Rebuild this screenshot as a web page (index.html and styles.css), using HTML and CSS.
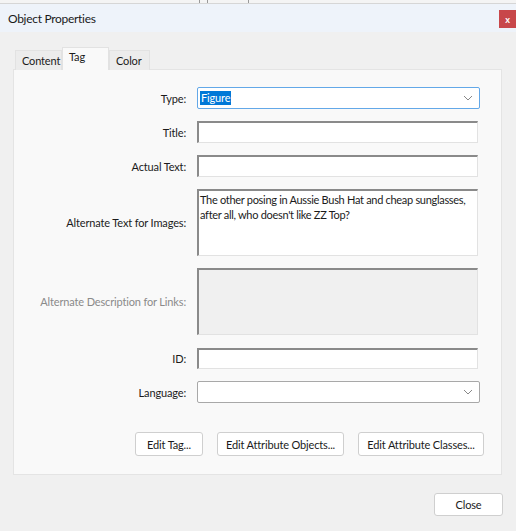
FILE: index.html
```html
<!DOCTYPE html>
<html>
<head>
<meta charset="utf-8">
<link rel="stylesheet" href="styles.css">
</head>
<body>
<div class="appstrip">
  <span class="seg seg1"></span><span class="seg seg2"></span><span class="seg seg3"></span><span class="seg seg4"></span>
</div>
<div class="titlebar">
  <span class="title">Object Properties</span>
  <span class="closex">x</span>
</div>
<div class="dialog">
  <div class="tabs">
    <span class="tab tab-content">Content</span>
    <span class="tab tab-tag active">Tag</span>
    <span class="tab tab-color">Color</span>
  </div>
  <div class="panel">
    <div class="form">
      <label class="lbl">Type:</label>
      <div class="select focus"><span class="sel">Figure</span><svg class="chev" width="10" height="6" viewBox="0 0 10 6"><path d="M1 1 L5 5 L9 1" fill="none" stroke="#888" stroke-width="1"/></svg></div>

      <label class="lbl">Title:</label>
      <div class="input"></div>

      <label class="lbl">Actual Text:</label>
      <div class="input"></div>

      <label class="lbl">Alternate Text for Images:</label>
      <div class="input area">The other posing in Aussie Bush Hat and cheap sunglasses, after all, who doesn't like ZZ Top?</div>

      <label class="lbl disabled">Alternate Description for Links:</label>
      <div class="input area off"></div>

      <label class="lbl r-id">ID:</label>
      <div class="input short r-id"></div>

      <label class="lbl">Language:</label>
      <div class="select"><span></span><svg class="chev" width="10" height="6" viewBox="0 0 10 6"><path d="M1 1 L5 5 L9 1" fill="none" stroke="#888" stroke-width="1"/></svg></div>
    </div>
    <div class="actions">
      <button class="btn b1">Edit Tag...</button>
      <button class="btn b2">Edit Attribute Objects...</button>
      <button class="btn b3">Edit Attribute Classes...</button>
    </div>
  </div>
  <div class="footer">
    <button class="btn close">Close</button>
  </div>
</div>
</body>
</html>
```

FILE: styles.css
```css
* { box-sizing: border-box; }
html, body { margin: 0; padding: 0; }
body {
  width: 516px;
  height: 531px;
  overflow: hidden;
  background: #f0f0f0;
  font-family: "Lato", "Open Sans", sans-serif;
  font-size: 11px;
  letter-spacing: -0.15px;
  color: #1b1b1b;
}
.appstrip {
  height: 4px;
  background: #f4f4f4;
  border-bottom: 1px solid #d6d6d6;
  display: flex;
  overflow: hidden;
}
.seg { height: 4px; border-right: 1px solid #999; }
.seg1 { width: 200px; }
.seg2 { width: 8px; }
.seg3 { width: 41px; }
.seg4 { flex: 1; border-right: none; }
.titlebar {
  height: 28px;
  background: #eef3fa;
  display: flex;
  align-items: center;
  justify-content: space-between;
  padding-left: 8px;
}
.title { font-size: 12px; letter-spacing: -0.3px; color: #1a1a1a; }
.closex {
  width: 17px;
  height: 18px;
  background: #c8474a;
  color: #fff;
  font-size: 9px;
  font-weight: bold;
  display: flex;
  align-items: center;
  justify-content: center;
  margin-top: 2px;
}
.dialog { padding: 16px 14px 0 13px; }
.tabs { display: flex; align-items: flex-end; height: 22px; margin-left: 2px; position: relative; z-index: 1; }
.tab {
  height: 20px;
  padding: 0 6px;
  background: #ececec;
  border: 1px solid #e2e2e2;
  border-bottom: none;
  display: flex;
  align-items: center;
}
.tab-content { width: 47px; }
.tab-tag { width: 47px; height: 23px; align-items: flex-start; padding-top: 2px; }
.tab-color { width: 41px; }
.tab.active { background: #f9f9f9; }
.panel {
  width: 489px;
  height: 406px;
  margin-top: -1px;
  background: #f9f9f9;
  border: 1px solid #e4e4e4;
  padding: 17px 0 0 0;
  display: flex;
  flex-direction: column;
}
.form {
  display: grid;
  grid-template-columns: 172px 283px;
  column-gap: 11px;
  row-gap: 12px;
  align-items: center;
}
.lbl { text-align: right; color: #1b1b1b; }
.lbl.disabled { color: #8a8a8a; }
.r-id { margin-top: 1px; }
.select {
  height: 22px;
  background: #fff;
  border: 1px solid #a8a8a8;
  border-radius: 2px;
  display: flex;
  align-items: center;
  justify-content: space-between;
  padding: 0 6px 0 2px;
}
.select.focus { border-color: #63a8e8; }
.sel { background: #0078d7; color: #fff; padding: 0 1px; line-height: 14px; }
.input {
  width: 281px;
  height: 22px;
  background: #fff;
  border-top: 2px solid #8a8a8a;
  border-left: 2px solid #8a8a8a;
  border-right: 1px solid #e2e2e2;
  border-bottom: 1px solid #e2e2e2;
}
.input.short { height: 21px; }
.input.area { height: 67px; padding: 1px 0 0 1px; line-height: 15px; letter-spacing: -0.3px; }
.input.off { background: #f0f0f0; }
.actions {
  display: flex;
  justify-content: flex-end;
  gap: 14px;
  padding-right: 17px;
  margin-top: 29px;
}
.btn {
  height: 24px;
  background: #fff;
  border: 1px solid #cfcfcf;
  border-radius: 3px;
  font-family: inherit;
  font-size: 11px;
  letter-spacing: -0.15px;
  color: #1b1b1b;
  padding: 0;
}
.b1 { width: 68px; }
.b2 { width: 127px; }
.b3 { width: 126px; }
.footer { display: flex; justify-content: flex-end; padding-top: 18px; }
.close { width: 69px; height: 23px; margin-right: -1px; }
```
